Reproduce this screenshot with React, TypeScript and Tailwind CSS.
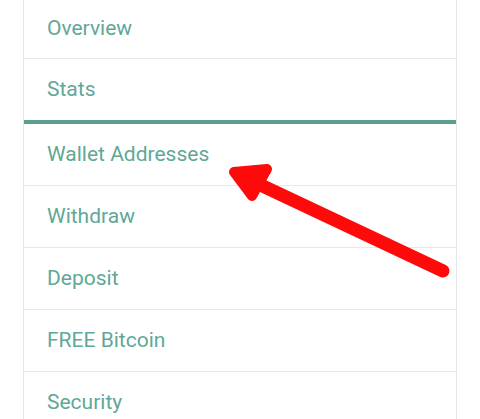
const ITEMS = [
  { label: "Overview", first: true },
  { label: "Stats", active: true },
  { label: "Wallet Addresses" },
  { label: "Withdraw" },
  { label: "Deposit" },
  { label: "FREE Bitcoin" },
  { label: "Security" },
];

function Arrow() {
  return (
    <svg
      className="pointer-events-none absolute left-0 top-0"
      width="480"
      height="419"
      viewBox="0 0 480 419"
    >
      <line
        x1="443"
        y1="271"
        x2="250"
        y2="180"
        stroke="#ff0a0a"
        strokeWidth="13"
        strokeLinecap="round"
      />
      <polygon
        points="234,172 267,169 252,196"
        fill="#ff0a0a"
        stroke="#ff0a0a"
        strokeWidth="10"
        strokeLinejoin="round"
      />
    </svg>
  );
}

export default function App() {
  return (
    <div
      className="relative h-[419px] w-[480px] overflow-hidden bg-white"
      style={{ fontFamily: "Roboto, 'Liberation Sans', sans-serif" }}
    >
      <div className="ml-[23px] w-[434px] border-x border-[#e6e6e6]">
        {ITEMS.map((item) => (
          <div
            key={item.label}
            className={
              (item.first ? "h-[59px] " : item.active ? "h-[65px] " : "h-[62px] ") +
              (item.active
                ? "border-b-4 border-[#5a9f91] "
                : "border-b border-[#e8e8e8] ") +
              "flex items-center pl-[23px] text-[21px] text-[#5fa898]"
            }
          >
            {item.label}
          </div>
        ))}
      </div>
      <Arrow />
    </div>
  );
}
